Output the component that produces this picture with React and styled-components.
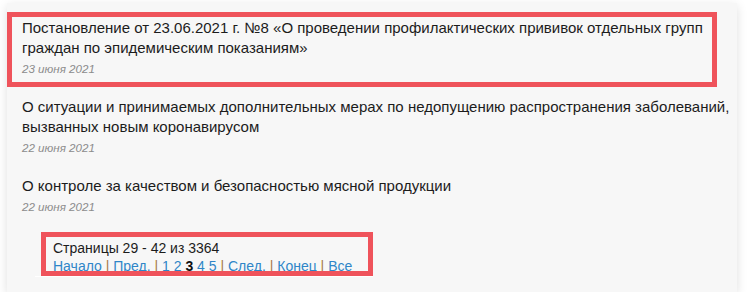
import React from "react";
import styled, { createGlobalStyle } from "styled-components";

const GlobalStyle = createGlobalStyle`
  body {
    margin: 0;
    background: #ffffff;
    font-family: "Liberation Sans", Arial, sans-serif;
  }
`;

const Panel = styled.div`
  margin: 3px 0 0 7px;
  width: 730px;
  box-sizing: border-box;
  padding: 15px 5px 15px 0;
  background: #f7f7f7;
  box-shadow: 0 3px 10px rgba(0, 0, 0, 0.13);
`;

const NewsList = styled.div`
  display: flex;
  flex-direction: column;
  gap: 20px;
`;

const NewsItem = styled.div`
  position: relative;
  padding-left: 15px;

  ${({ $marked }) =>
    $marked &&
    `
    &::after {
      content: "";
      position: absolute;
      left: 0;
      top: -6px;
      width: 710px;
      height: 75px;
      box-sizing: border-box;
      border: 5px solid #ef535b;
      pointer-events: none;
    }
  `}
`;

const NewsTitle = styled.div`
  font-size: 15px;
  line-height: 20px;
  color: #1c1c1c;
`;

const NewsDate = styled.div`
  margin-top: 3px;
  font-size: 11.6px;
  line-height: 16px;
  font-style: italic;
  color: #8c8c8c;
`;

const Pager = styled.div`
  position: relative;
  margin: 24px 0 0 28px;
  width: 338px;
  box-sizing: border-box;
  padding: 0 0 1px 18px;
  border-bottom: 1px solid #ffffff;
  font-size: 14px;
  line-height: 18px;
  color: #1c1c1c;

  &::after {
    content: "";
    position: absolute;
    left: 6px;
    top: -7px;
    width: 332px;
    height: 44px;
    box-sizing: border-box;
    border: 5px solid #ef535b;
    pointer-events: none;
  }
`;

const PagerLinks = styled.div`
  white-space: nowrap;
`;

const PageLink = styled.a`
  color: #2f86c8;
  text-decoration: underline;
`;

const Sep = styled.span`
  color: #a87a45;
`;

const Current = styled.b`
  color: #111;
`;

const news = [
  {
    title:
      "Постановление от 23.06.2021 г. №8 «О проведении профилактических прививок отдельных групп граждан по эпидемическим показаниям»",
    date: "23 июня 2021",
    marked: true,
  },
  {
    title:
      "О ситуации и принимаемых дополнительных мерах по недопущению распространения заболеваний, вызванных новым коронавирусом",
    date: "22 июня 2021",
  },
  {
    title: "О контроле за качеством и безопасностью мясной продукции",
    date: "22 июня 2021",
  },
];

export default function App() {
  return (
    <>
      <GlobalStyle />
      <Panel>
        <NewsList>
          {news.map((n) => (
            <NewsItem key={n.title} $marked={n.marked}>
              <NewsTitle>{n.title}</NewsTitle>
              <NewsDate>{n.date}</NewsDate>
            </NewsItem>
          ))}
        </NewsList>
        <Pager>
          <div>Страницы 29 - 42 из 3364</div>
          <PagerLinks>
            <PageLink href="#">Начало</PageLink> <Sep>|</Sep>{" "}
            <PageLink href="#">Пред.</PageLink> <Sep>|</Sep>{" "}
            <PageLink href="#">1</PageLink> <PageLink href="#">2</PageLink>{" "}
            <Current>3</Current> <PageLink href="#">4</PageLink>{" "}
            <PageLink href="#">5</PageLink> <Sep>|</Sep>{" "}
            <PageLink href="#">След.</PageLink> <Sep>|</Sep>{" "}
            <PageLink href="#">Конец</PageLink> <Sep>|</Sep>{" "}
            <PageLink href="#">Все</PageLink>
          </PagerLinks>
        </Pager>
      </Panel>
    </>
  );
}
